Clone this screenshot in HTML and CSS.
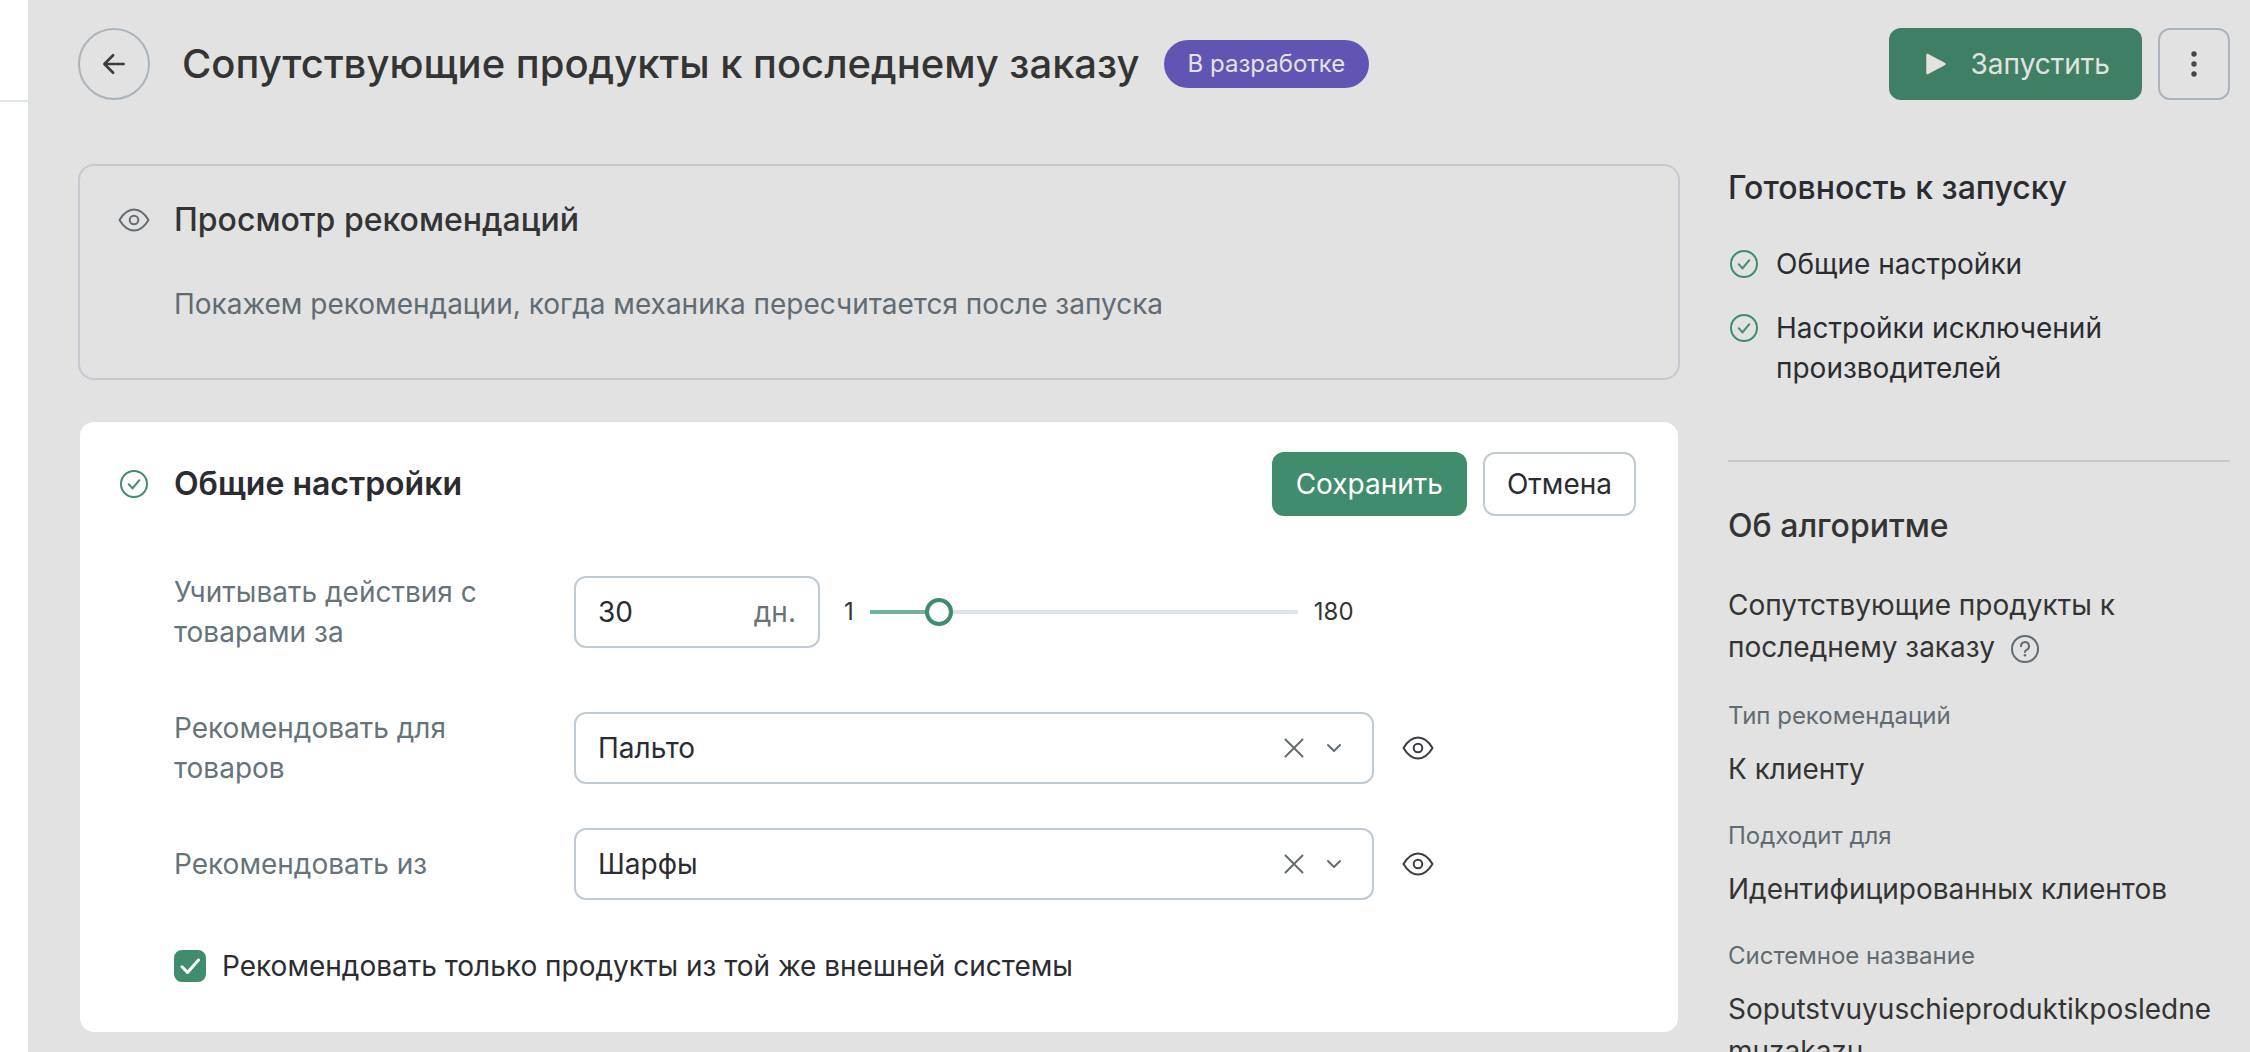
FILE: index.html
```html
<!DOCTYPE html>
<html lang="ru">
<head>
<meta charset="utf-8">
<meta name="viewport" content="width=device-width, initial-scale=1">
<title>Сопутствующие продукты к последнему заказу</title>
<link rel="stylesheet" href="styles.css">
</head>
<body>
<svg class="sprite" aria-hidden="true">
  <symbol id="icon-eye" viewBox="0 0 32 32"><path d="M1.500 16C5.500 9.300 10.400 5.500 16 5.500S26.500 9.300 30.500 16C26.500 22.700 21.600 26.500 16 26.500S5.500 22.700 1.500 16Z"/><circle cx="16" cy="16" r="4.300"/></symbol>
  <symbol id="icon-done" viewBox="0 0 32 32"><circle cx="16" cy="16" r="13"/><path d="M10.700 16.200l3.800 4.200 6.800-8.200"/></symbol>
  <symbol id="icon-cross" viewBox="0 0 32 32"><path d="M7.500 7.500l17 17M24.500 7.500l-17 17"/></symbol>
  <symbol id="icon-chevron" viewBox="0 0 32 32"><path d="M10 13l6 6 6-6"/></symbol>
</svg>
<div class="app">
  <aside class="rail"><div class="rail-head"></div></aside>
  <div class="page">
    <header class="topbar">
      <button class="back" type="button" aria-label="Назад">
        <svg class="icon" viewBox="0 0 32 32"><path d="M27 16H5.500M15 6L5 16l10 10"/></svg>
      </button>
      <h1 class="page-title">Сопутствующие продукты к последнему заказу</h1>
      <span class="badge">В разработке</span>
      <div class="topbar-actions">
        <button class="btn btn-primary btn-large" type="button">
          <svg class="icon-play" viewBox="0 0 24 24"><path d="M4 3.500v17L20 12Z"/></svg>
          Запустить
        </button>
        <button class="more" type="button" aria-label="Ещё">
          <svg class="icon-dots" viewBox="0 0 32 32"><circle cx="16" cy="6" r="2.700"/><circle cx="16" cy="16" r="2.700"/><circle cx="16" cy="26" r="2.700"/></svg>
        </button>
      </div>
    </header>
    <div class="columns">
      <main class="content">
        <section class="card card-preview">
          <header class="card-head">
            <svg class="icon icon-muted"><use href="#icon-eye"/></svg>
            <h2 class="heading">Просмотр рекомендаций</h2>
          </header>
          <p class="preview-text">Покажем рекомендации, когда механика пересчитается после запуска</p>
        </section>
        <form class="card card-settings">
          <header class="card-head">
            <svg class="icon icon-done"><use href="#icon-done"/></svg>
            <h2 class="heading heading-strong">Общие настройки</h2>
            <div class="card-actions">
              <button class="btn btn-primary" type="button">Сохранить</button>
              <button class="btn btn-outline" type="button">Отмена</button>
            </div>
          </header>
          <div class="fields">
            <div class="row row-days">
              <label class="label" for="days">Учитывать действия с товарами за</label>
              <div class="days-box">
                <input class="days" id="days" type="text" inputmode="numeric" value="30">
                <span class="unit">дн.</span>
              </div>
              <div class="range">
                <span>1</span>
                <input class="slider" type="range" min="1" max="180" value="30" aria-label="Количество дней">
                <span>180</span>
              </div>
            </div>
            <div class="row">
              <label class="label" for="target">Рекомендовать для товаров</label>
              <div class="select-box">
                <select class="select" id="target"><option>Пальто</option></select>
                <div class="select-icons">
                  <button class="plain" type="button" aria-label="Очистить"><svg class="icon icon-muted"><use href="#icon-cross"/></svg></button>
                  <svg class="icon icon-muted icon-chevron"><use href="#icon-chevron"/></svg>
                </div>
              </div>
              <button class="plain" type="button" aria-label="Посмотреть"><svg class="icon"><use href="#icon-eye"/></svg></button>
            </div>
            <div class="row">
              <label class="label" for="source">Рекомендовать из</label>
              <div class="select-box">
                <select class="select" id="source"><option>Шарфы</option></select>
                <div class="select-icons">
                  <button class="plain" type="button" aria-label="Очистить"><svg class="icon icon-muted"><use href="#icon-cross"/></svg></button>
                  <svg class="icon icon-muted icon-chevron"><use href="#icon-chevron"/></svg>
                </div>
              </div>
              <button class="plain" type="button" aria-label="Посмотреть"><svg class="icon"><use href="#icon-eye"/></svg></button>
            </div>
            <label class="check">
              <span class="check-box">
                <input class="check-input" type="checkbox" checked>
                <svg class="check-mark" viewBox="0 0 32 32"><path d="M8 16.800l5.500 5.700L24.500 10"/></svg>
              </span>
              Рекомендовать только продукты из той же внешней системы
            </label>
          </div>
        </form>
      </main>
      <aside class="side">
        <section class="ready">
          <h2 class="heading">Готовность к запуску</h2>
          <ul class="ready-list">
            <li class="ready-item"><svg class="icon icon-done"><use href="#icon-done"/></svg><span>Общие настройки</span></li>
            <li class="ready-item"><svg class="icon icon-done"><use href="#icon-done"/></svg><span>Настройки исключений производителей</span></li>
          </ul>
        </section>
        <section class="about">
          <h2 class="heading">Об алгоритме</h2>
          <p class="algorithm">Сопутствующие продукты к последнему заказу <button class="plain help" type="button" aria-label="Справка"><svg class="icon icon-muted" viewBox="0 0 32 32"><circle cx="16" cy="16" r="13"/><path d="M12 13.200a4 4 0 1 1 5.600 3.600c-1.100.5-1.600 1-1.600 2.200"/><circle class="dot" cx="16" cy="22.300" r="1.300"/></svg></button></p>
          <dl class="facts">
            <dt>Тип рекомендаций</dt><dd>К клиенту</dd>
            <dt>Подходит для</dt><dd>Идентифицированных клиентов</dd>
            <dt>Системное название</dt><dd>Soputstvuyuschieproduktikposlednemuzakazu</dd>
          </dl>
        </section>
      </aside>
    </div>
  </div>
</div>
</body>
</html>
```
FILE: styles.css
```css
:root {
  --bg: #e2e2e2;
  --ink: #2b2c31;
  --muted: #66737b;
  --line: #c4cad0;
  --green: #408d6d;
}

* { box-sizing: border-box; }

body {
  margin: 0;
  background: var(--bg);
  color: var(--ink);
  font: 28px/40px Inter, "Liberation Sans", sans-serif;
}

h1, h2, p, ul, dl, dd { margin: 0; padding: 0; }

button, input, select { font: inherit; color: inherit; }

button { cursor: pointer; }

.sprite { position: absolute; width: 0; height: 0; }

.app {
  display: flex;
  height: 100vh;
  overflow: hidden;
}

.rail {
  flex: none;
  width: 28px;
  background: #fff;
}

.rail-head {
  height: 102px;
  border-bottom: 2px solid #dfe6eb;
}

.page {
  flex: 1;
  min-width: 0;
  padding: 28px 20px 0 49px;
  border-left: 1px solid #dbe1e5;
}

.icon {
  flex: none;
  display: block;
  width: 32px;
  height: 32px;
  fill: none;
  stroke: #3a3c41;
  stroke-width: 2;
  stroke-linecap: round;
  stroke-linejoin: round;
}

.icon-muted { stroke: #626c73; }
.icon-done { stroke: var(--green); }

.plain {
  display: block;
  padding: 0;
  border: 0;
  background: none;
}

/* top bar */
.topbar {
  display: flex;
  align-items: center;
  height: 72px;
}

.back, .more {
  display: grid;
  place-items: center;
  flex: none;
  width: 72px;
  height: 72px;
  padding: 0;
  border: 2px solid #abb4bc;
  background: none;
}

.back { border-radius: 50%; }
.back .icon { width: 28px; height: 28px; stroke-width: 3; }
.more { border-radius: 12px; }

.page-title {
  margin-left: 32px;
  font-size: 40px;
  line-height: 48px;
  font-weight: 500;
  color: #343434;
}

.badge {
  margin-left: 24px;
  padding: 0 24px;
  border-radius: 24px;
  background: #6055b2;
  color: #e2e2e2;
  font-size: 24px;
  line-height: 48px;
}

.topbar-actions {
  display: flex;
  gap: 16px;
  margin-left: auto;
}

.btn {
  display: flex;
  align-items: center;
  height: 64px;
  padding: 0 24px;
  border: 0;
  border-radius: 12px;
}

.btn-primary { background: var(--green); color: #fff; }

.btn-outline {
  padding: 0 22px;
  border: 2px solid #bfcad4;
  background: none;
}

.btn-large {
  gap: 22px;
  height: 72px;
  padding: 0 32px 0 34px;
  background: #3f8065;
  color: #e2e2e2;
}

.icon-play {
  width: 26px;
  height: 26px;
  fill: #e2e2e2;
  stroke: #e2e2e2;
  stroke-width: 2;
  stroke-linejoin: round;
}

.icon-dots { width: 32px; height: 32px; fill: #45474b; }

/* layout */
.columns {
  display: grid;
  grid-template-columns: minmax(0, 1fr) 502px;
  gap: 48px;
  margin-top: 64px;
}

.card {
  padding: 0 42px 0 38px;
  border: 2px solid var(--line);
  border-radius: 16px;
}

.card-preview {
  padding-top: 34px;
  padding-bottom: 54px;
  color: #343434;
}

.card-settings {
  margin-top: 40px;
  padding-top: 30px;
  padding-bottom: 46px;
  border-color: #dde2e5;
  background: #fff;
}

.card-head {
  display: flex;
  align-items: center;
  gap: 24px;
}

.heading {
  font-size: 32px;
  line-height: 40px;
  font-weight: 500;
}

.heading-strong { font-weight: 600; }

.preview-text {
  margin: 44px 0 0 56px;
  color: #616b72;
}

.card-actions {
  display: flex;
  gap: 16px;
  margin-left: auto;
}

/* form */
.fields { margin: 56px 0 0 56px; }

.row {
  display: grid;
  grid-template-columns: 376px 800px auto;
  justify-content: start;
  align-items: center;
  column-gap: 24px;
  margin-top: 40px;
}

.row > .plain { margin-left: 4px; }

.row-days {
  grid-template-columns: 376px 246px auto;
  margin: 0 0 56px;
}

.fields .row-days + .row { margin-top: 0; }

.label {
  width: 320px;
  color: var(--muted);
}

.days-box {
  display: flex;
  align-items: center;
  height: 72px;
  padding: 0 22px;
  border: 2px solid #bfcad4;
  border-radius: 12px;
}

.days {
  flex: 1;
  min-width: 0;
  padding: 0;
  border: 0;
  outline: 0;
  background: none;
}

.unit { color: var(--muted); }

.range {
  display: flex;
  align-items: center;
  gap: 16px;
  font-size: 24px;
  color: #343434;
}

/* the thumb's centre travels over the whole 428px track */
.slider {
  appearance: none;
  width: 456px;
  height: 28px;
  margin: 0 -14px;
  background: linear-gradient(#6fb39b, #6fb39b) 14px 12px / 69px 4px no-repeat, linear-gradient(#dce3e9, #dce3e9) 14px 12px / 428px 4px no-repeat;
}

.slider::-webkit-slider-thumb {
  appearance: none;
  width: 28px;
  height: 28px;
  border: 4px solid var(--green);
  border-radius: 50%;
  background: #fff;
}

.select-box { position: relative; }

.select {
  appearance: none;
  display: block;
  width: 100%;
  height: 72px;
  padding: 0 120px 0 22px;
  border: 2px solid #bfcad4;
  border-radius: 12px;
  background: none;
}

.select-icons {
  position: absolute;
  inset: 0 24px 0 auto;
  display: flex;
  align-items: center;
  gap: 8px;
}

.icon-chevron { pointer-events: none; }

.check {
  display: flex;
  align-items: center;
  gap: 16px;
  margin-top: 46px;
}

.check-box {
  display: grid;
  width: 32px;
  height: 32px;
}

.check-input, .check-mark { grid-area: 1 / 1; }

.check-input {
  appearance: none;
  width: 32px;
  height: 32px;
  margin: 0;
  border: 2px solid #bfcad4;
  border-radius: 8px;
}

.check-input:checked { border-color: var(--green); background: var(--green); }

.check-mark {
  width: 32px;
  height: 32px;
  fill: none;
  stroke: #fff;
  stroke-width: 3;
  stroke-linecap: round;
  stroke-linejoin: round;
  pointer-events: none;
}

/* side column */
.side { padding-top: 4px; }

.ready {
  padding-bottom: 72px;
  border-bottom: 2px solid var(--line);
}

.ready-list {
  display: grid;
  gap: 24px;
  margin-top: 36px;
  list-style: none;
}

.ready-item {
  display: flex;
  gap: 16px;
}

.ready-item .icon { margin-top: 4px; }

.about { padding-top: 44px; color: #343434; }

.algorithm {
  margin-top: 38px;
  line-height: 42px;
}

.help {
  display: inline-block;
  margin-left: 6px;
  vertical-align: middle;
}

.help .dot { fill: #626c73; stroke: none; }

.facts {
  margin-top: 32px;
  line-height: 42px;
}

.facts dt {
  margin: 30px 0 16px;
  color: #616b72;
  font-size: 24px;
  line-height: 32px;
}

.facts dt:first-child { margin-top: 0; }

.facts dd { overflow-wrap: anywhere; }
```
